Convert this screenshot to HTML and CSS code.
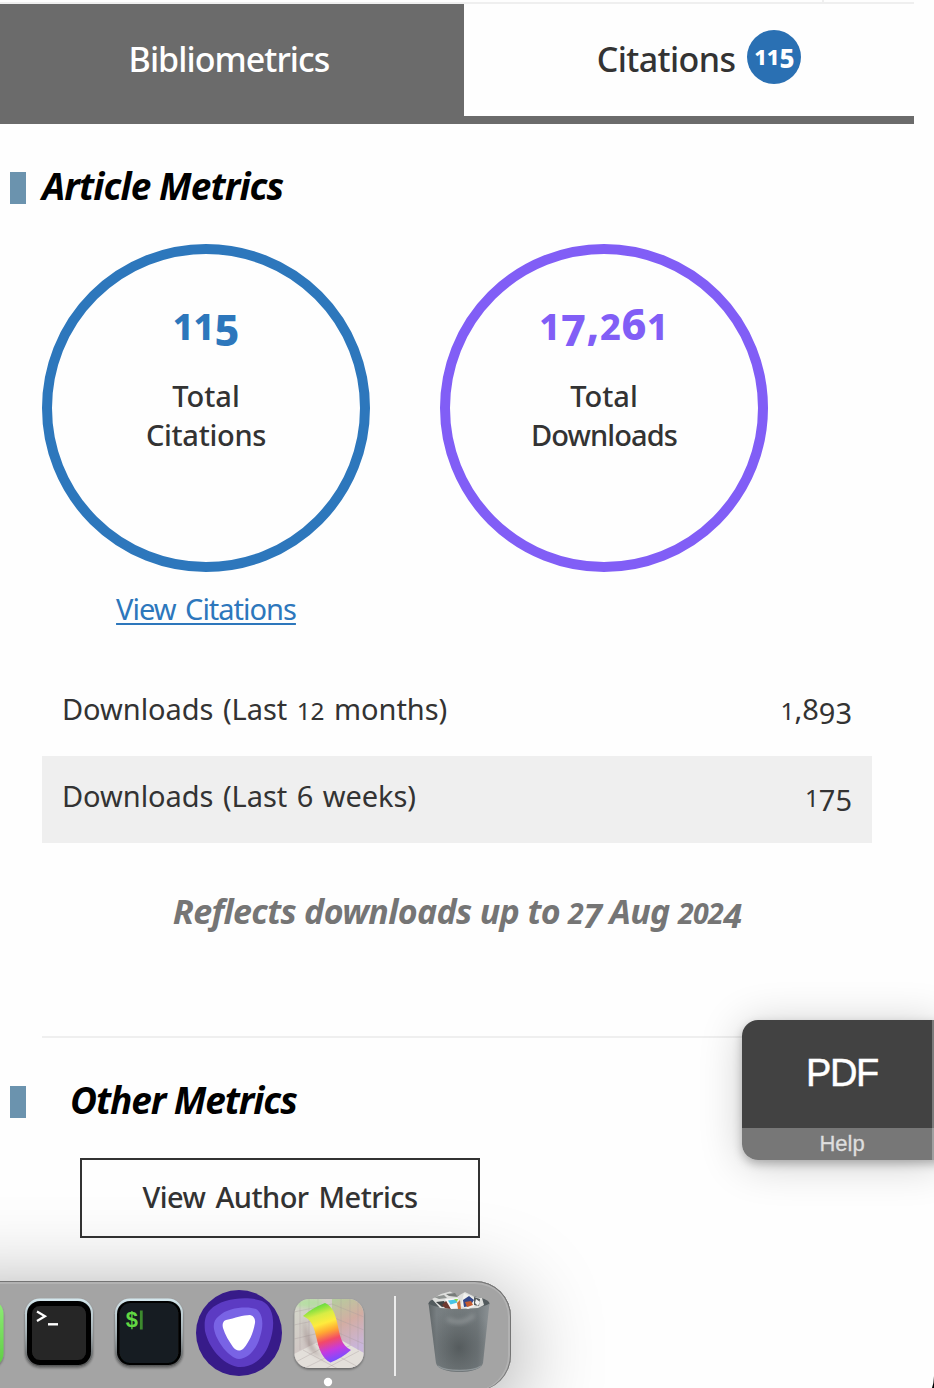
FILE: index.html
```
<!DOCTYPE html>
<html lang="en">
<head>
<meta charset="utf-8">
<title>Article Metrics</title>
<link rel="stylesheet" href="styles.css">
</head>
<body>
<main class="page">
  <div class="topline"><i></i></div>
  <nav class="tabs">
    <a class="tab active"><span class="t-bib">Bibliometrics</span></a>
    <a class="tab"><span class="t-cit">Citations</span><span class="count"><span class="s">11</span><span class="d">5</span></span></a>
  </nav>
  <section class="article">
    <h2 class="heading"><span class="h-art">Article Metrics</span></h2>
    <div class="rings">
      <div class="metric">
        <div class="ring blue">
          <strong class="total"><span class="s">11</span><span class="d">5</span></strong>
          <span class="label">Total<br><span class="l-cit">Citations</span></span>
        </div>
        <a class="link">View Citations</a>
      </div>
      <div class="metric">
        <div class="ring violet">
          <strong class="total wide"><span class="s">1</span><span class="d">7</span>,<span class="s">2</span>6<span class="s">1</span></strong>
          <span class="label">Total<br><span class="l-dow">Downloads</span></span>
        </div>
      </div>
    </div>
    <div class="row"><span class="r-a">Downloads (Last <span class="s">12</span> months)</span><span class="v-a"><span class="s">1</span>,8<span class="d">93</span></span></div>
    <div class="row shaded"><span class="r-b">Downloads (Last 6 weeks)</span><span class="v-b"><span class="s">1</span><span class="d">75</span></span></div>
    <p class="note"><span>Reflects downloads up to <span class="s">2</span><span class="d">7</span> Aug <span class="s">202</span><span class="d">4</span></span></p>
  </section>
  <section class="other">
    <h2 class="heading"><span class="h-oth">Other Metrics</span></h2>
    <button class="button"><span>View Author Metrics</span></button>
  </section>
</main>

<aside class="pdf">
  <div class="pdf-main">PDF</div>
  <div class="pdf-help">Help</div>
</aside>

<footer class="desktop">
<div class="dock">
  <svg width="520" height="107" viewBox="0 1281 520 107">
    <defs>
      <linearGradient id="rim" x1="0" y1="0" x2="0" y2="1"><stop offset="0" stop-color="#d5e8ee"/><stop offset=".5" stop-color="#a3aeb2"/><stop offset="1" stop-color="#555"/></linearGradient>
      <linearGradient id="green" x1="0" y1="0" x2="0" y2="1"><stop offset="0" stop-color="#90ed78"/><stop offset="1" stop-color="#5dcc42"/></linearGradient>
      <linearGradient id="rainbow" x1="316" y1="1306" x2="334" y2="1360" gradientUnits="userSpaceOnUse"><stop offset="0" stop-color="#65dc3e"/><stop offset=".17" stop-color="#d8ed45"/><stop offset=".33" stop-color="#ffeb3d"/><stop offset=".48" stop-color="#ffa832"/><stop offset=".64" stop-color="#f34a67"/><stop offset=".82" stop-color="#c53ae0"/><stop offset="1" stop-color="#7c4cff"/></linearGradient>
      <linearGradient id="wall" x1="0" y1="0" x2="1" y2="1"><stop offset="0" stop-color="#d5d9cb"/><stop offset=".5" stop-color="#cfc3c3"/><stop offset="1" stop-color="#dfdbe1"/></linearGradient>
      <linearGradient id="side" x1="0" y1="0" x2=".3" y2="1"><stop offset="0" stop-color="#b3cf9d"/><stop offset=".5" stop-color="#d3ada3"/><stop offset="1" stop-color="#c9b5db"/></linearGradient>
      <linearGradient id="can" x1="0" y1="0" x2="1" y2="0"><stop offset="0" stop-color="#5f6567"/><stop offset=".13" stop-color="#787f82"/><stop offset=".45" stop-color="#757c7e"/><stop offset=".8" stop-color="#747b7e"/><stop offset="1" stop-color="#8b9194"/></linearGradient>
      <radialGradient id="canshade" cx=".5" cy=".65" r=".6"><stop offset="0" stop-color="#404648" stop-opacity=".6"/><stop offset="1" stop-color="#505658" stop-opacity="0"/></radialGradient>
      <filter id="drop" x="-20%" y="-20%" width="140%" height="140%"><feDropShadow dx="0" dy="1.5" stdDeviation="1.2" flood-opacity=".4"/></filter>
      <filter id="soft" x="-30%" y="-60%" width="160%" height="220%"><feGaussianBlur stdDeviation="2"/></filter>
      <clipPath id="tile"><rect x="294.500" y="1299" width="69" height="69" rx="15"/></clipPath>
    </defs>
    <rect x="-66" y="1299" width="69.500" height="69" rx="15" fill="url(#green)" filter="url(#drop)"/>
    <g filter="url(#drop)">
      <rect x="25" y="1298.500" width="68" height="68" rx="15" fill="url(#rim)"/>
      <rect x="27" y="1301" width="64" height="64" rx="13" fill="#000"/>
      <rect x="32" y="1306" width="54" height="54" rx="8" fill="#262626"/>
    </g>
    <path d="M37 1311.500l8 4.700-8 4.800" fill="none" stroke="#fff" stroke-width="2.200"/><path d="M48 1324.300h10" stroke="#fff" stroke-width="2.400"/>
    <g filter="url(#drop)">
      <rect x="115" y="1298.500" width="68" height="68" rx="15" fill="url(#rim)"/>
      <rect x="117" y="1301" width="64" height="64" rx="13" fill="#000"/>
      <rect x="119.500" y="1303" width="59" height="60" rx="11" fill="#151e21"/>
    </g>
    <text x="125.300" y="1326.500" class="dollar">$</text><path d="M141.300 1310.500v19" stroke="#3d8a2e" stroke-width="2.800"/>
    <circle cx="239" cy="1333" r="43" fill="#371b89"/>
    <path d="M210 1310C222 1297 250 1296 262 1301C276 1308 275 1329 269 1344C263 1361 250 1368 238 1367C222 1364 209 1348 205 1331C204 1322 205 1315 210 1310Z" fill="#5c3bc3"/>
    <path d="M219 1316C228 1307 248 1306 256 1309C263 1313 264 1325 260 1337C256 1351 247 1359 239 1359C229 1358 216 1341 214 1329C213 1323 215 1319 219 1316Z" fill="#7963e5"/>
    <path d="M226 1320C235 1318 243 1315 250 1315C254 1316 255.500 1319 255 1323C253 1334 249 1342 244 1348C240 1352 236 1351 233 1347C229 1341 225 1335 223 1328C222 1324 223 1321 226 1320Z" fill="#fff"/>
    <g filter="url(#drop)"><g clip-path="url(#tile)">
      <rect x="294" y="1298" width="70" height="71" fill="url(#wall)"/>
      <path d="M332 1298h32v58l-32-18z" fill="url(#side)"/>
      <path d="M294 1354l38-19 32 18v16h-70z" fill="#e3dfda"/>
      <path d="M300 1298v52M309 1298v48M318 1298v43M341 1298v42M350 1298v46M358 1298v52M294 1312l38-8 32 13M294 1325l38-8 32 13M294 1339l38-9 32 14M294 1363l45-24M303 1369l48-24M325 1369l34-18M303 1350l37 20M316 1344l44 24" stroke="#a99c9e" stroke-opacity=".45" fill="none" stroke-width=".8"/>
      <ellipse cx="309" cy="1303" rx="14" ry="5" fill="#a4e48c" opacity=".6" filter="url(#soft)"/>
      <path d="M304 1318C307 1335 313 1351 326 1361L312 1352C307 1346 303 1335 304 1318Z" fill="#7e6866" opacity=".45" filter="url(#soft)"/>
    </g></g>
    <path d="M303 1316Q312 1308 325 1303C332 1306 335 1313 337 1322C340 1336 341 1345 351 1350Q342 1358 330.500 1362.500C323 1359 319 1350 317 1340C314 1327 312 1320 303 1316Z" fill="url(#rainbow)"/>
    <circle cx="328" cy="1382" r="4.200" fill="#fff"/>
    <path d="M395 1296v80" stroke="#ececec" stroke-width="2"/>
    <ellipse cx="459" cy="1303.500" rx="30.500" ry="8" fill="#535b5e"/>
    <path d="M428.500 1303C432 1310 486 1310 489.500 1303L483 1363C481 1375 438 1375 436 1363Z" fill="url(#can)"/>
    <path d="M429 1303C432 1310 486 1310 489 1303L483 1363C481 1375 438 1375 436 1363Z" fill="url(#canshade)"/>
    <g>
      <path d="M432 1299l9-5 9-2.500 8 4.500 7-4 10 5 7 1 2 7-6 3-18 1-20-1z" fill="#dedfdd"/>
      <path d="M434 1297l10-2 3 3-8 1z" fill="#8f9391"/><path d="M446 1294l9-1 3 4-9-1z" fill="#777b79"/>
      <path d="M436 1302l8-1 3 5-5 1z" fill="#3e4345"/><path d="M442 1305l5-5 4 9-6-1z" fill="#6d3930"/>
      <path d="M445 1299l13-1 2 10-9 1z" fill="#f8f8f8"/><path d="M448 1300.500l8-1 1.500 3-7 2z" fill="#48c5e6"/><path d="M454 1299l4 0-1 3z" fill="#8bd549"/>
      <path d="M457 1303l3-3 1 9h-3z" fill="#ce713b"/>
      <path d="M461 1306l3-13 10 5 1 8-7 3z" fill="#f2f2ef"/><path d="M463 1300l6-4 5 4-4 6-6 1z" fill="#344788"/><path d="M465 1302l6-1 2 4-6 2z" fill="#c45b30"/>
      <path d="M474 1297l6 2-1 7-5-1z" fill="#555b5c"/><path d="M476 1299l4 3-2 4-3-3z" fill="#f0f0f0"/>
    </g>
    <path d="M447 1319C458 1325 468 1321 474 1315" fill="none" stroke="#9ca1a3" stroke-width="4" opacity=".65" filter="url(#soft)"/>
    <path d="M438 1366C447 1372 472 1372 481 1366" fill="none" stroke="#8f9699" stroke-width="1.500"/>
  </svg>
</div>
</footer>
<svg class="corner" width="4" height="14" viewBox="0 0 4 14"><path d="M4 2Q3.800 9 2 14h2z" fill="#000"/></svg>
</body>
</html>
```
FILE: styles.css
```
* { box-sizing: border-box; }
body { margin: 0; width: 934px; height: 1388px; overflow: hidden; background: #fefefe; color: #333; font-family: "Noto Sans", "Open Sans", sans-serif; position: relative; }
.page { width: 914px; }
.s { font-size: .84em; }
.d { position: relative; top: .13em; }

.topline { height: 4px; border-bottom: 2px solid #efefef; padding-left: 822px; }
.topline i { display: block; width: 2px; height: 2px; background: #efefef; }
.tabs { display: flex; height: 120px; border-bottom: 8px solid #6b6b6b; font-size: 34px; line-height: 46px; }
.tab { flex: 1; display: flex; justify-content: center; align-items: flex-start; padding-top: 32px; font-weight: 500; }
.tab.active { flex: 0 0 464px; background: #6b6b6b; color: #fff; padding-right: 6px; }
.tab:not(.active) { padding-left: 20px; }
.t-bib { letter-spacing: -.95px; }
.t-cit { letter-spacing: -.6px; }
.count { width: 54px; height: 54px; margin: -6px 0 0 12px; border-radius: 50%; background: #2a70b3; color: #fff; font-size: 26px; line-height: 50px; font-weight: 800; text-align: center; }

.article { padding: 48px 42px 0; height: 914px; }
.heading { display: flex; align-items: center; margin: 0 0 0 -32px; height: 32px; color: #000; font-size: 37px; font-style: italic; font-weight: 700; letter-spacing: -.9px; white-space: nowrap; }
.heading span { margin-top: -5px; }
.heading::before { content: ""; width: 16px; height: 32px; margin-right: 16px; background: #6b93ae; }
.h-oth { letter-spacing: -1.1px; }
.rings { display: flex; gap: 70px; margin-top: 40px; height: 425px; }
.metric { width: 328px; text-align: center; }
.ring { width: 328px; height: 328px; border: 10px solid; border-radius: 50%; padding-top: 38px; }
.blue { border-color: #2d77bc; } .blue .total { color: #2d77bc; letter-spacing: 0; }
.violet { border-color: #815ef6; } .violet .total { color: #815ef6; }
.total { display: block; height: 84px; font-size: 43px; line-height: 64px; font-weight: 800; letter-spacing: .7px; }
.label { display: block; font-size: 29px; line-height: 39px; font-weight: 500; }
.l-cit { letter-spacing: -.3px; }
.l-dow { letter-spacing: -.9px; }
.link { display: block; margin-top: 17px; color: #2d77bc; font-size: 29px; line-height: 39px; letter-spacing: -1px; word-spacing: 3px; text-decoration: underline; text-decoration-thickness: 2px; text-underline-offset: 3px; }
.row { display: flex; justify-content: space-between; height: 87px; padding: 20px 20px 0; font-size: 29px; line-height: 40px; font-weight: 400; white-space: nowrap; }
.r-a, .r-b { letter-spacing: -.05px; word-spacing: 2px; }
.shaded { background: #efefef; }
.note { margin: 45px 0 0; text-align: center; color: #757575; font-size: 34px; line-height: 46px; font-weight: 700; font-style: italic; letter-spacing: -.65px; }

.other { margin: -2px 42px 0; padding-top: 48px; border-top: 2px solid #efefef; }
.other .heading::before { margin-right: 44px; }
.button { display: block; width: 400px; height: 80px; margin: 40px 0 0 38px; padding: 0; border: 2px solid #333; background: none; color: #333; font: 500 29px/74px "Noto Sans", sans-serif; letter-spacing: -.55px; word-spacing: 3px; }
.button span { display: block; height: 76px; }

.pdf { position: absolute; left: 742px; top: 1020px; width: 200px; height: 140px; border-radius: 16px 0 0 16px; overflow: hidden; box-shadow: 0 4px 10px rgba(0,0,0,.25), 0 4px 44px rgba(0,0,0,.2); font-family: "Liberation Sans", Arial, sans-serif; text-align: center; }
.pdf::after { content: ""; position: absolute; left: 190px; top: 0; width: 2px; height: 140px; background: rgba(255,255,255,.3); }
.pdf-main { height: 108px; background: #424242; color: #fff; font-size: 38px; line-height: 106px; letter-spacing: -1.4px; -webkit-text-stroke: .5px #fff; }
.pdf-help { height: 32px; background: #777; color: #dedede; font-size: 22px; line-height: 31px; -webkit-text-stroke: .3px #dedede; }
.desktop { position: absolute; left: 0; top: 1138px; width: 934px; height: 250px; padding-top: 143px; overflow: hidden; pointer-events: none; }
.dock { margin-left: -100px; width: 611px; height: 110px; padding-left: 100px; border-radius: 0 36px 36px 0; background: #a4a4a4; box-shadow: inset 0 1px #747474, inset -1px 0 #747474, inset 0 3px #b2b2b2, inset -3px 0 #b2b2b2, 0 16px 90px rgba(0,0,0,.4); }
.dock svg { display: block; }
.dollar { font: 700 22px "Liberation Mono", monospace; fill: #61d743; }
.corner { position: absolute; left: 930px; top: 1374px; }
```
